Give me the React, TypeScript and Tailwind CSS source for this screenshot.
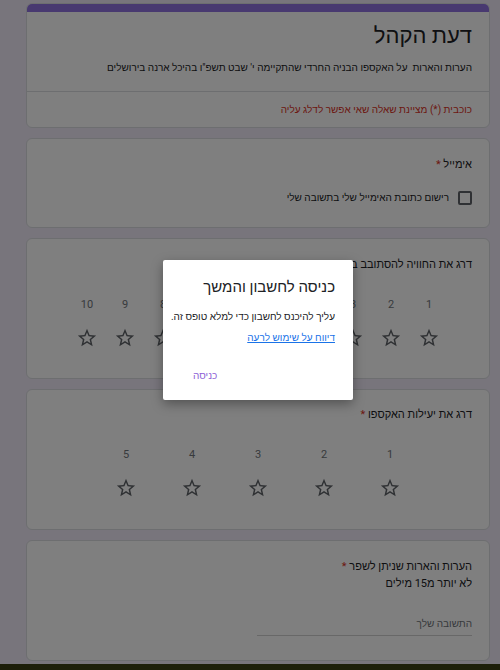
const STAR_PATH =
  "M22 9.24l-7.19-.62L12 2 9.19 8.63 2 9.24l5.46 4.73L5.82 21 12 17.27 18.18 21l-1.63-7.03L22 9.24zM12 15.4l-3.76 2.27 1-4.28-3.32-2.88 4.38-.38L12 6.1l1.71 4.04 4.38.38-3.32 2.88 1 4.28L12 15.4z";

function StarOutline() {
  return (
    <svg viewBox="0 0 24 24" className="w-[22px] h-[22px] fill-[#5f6368]">
      <path d={STAR_PATH} />
    </svg>
  );
}

function Card({ children, className = "" }: { children: React.ReactNode; className?: string }) {
  return (
    <div className={`bg-white border border-[#dadce0] rounded-[6px] ${className}`}>{children}</div>
  );
}

function QuestionTitle({ text, required }: { text: string; required?: boolean }) {
  return (
    <p className="text-[11px] leading-[16px] text-[#202124]">
      {text}
      {required && <span className="text-[#d93025]"> *</span>}
    </p>
  );
}

function StarRating({ count, colWidth }: { count: number; colWidth: string }) {
  const items = Array.from({ length: count }, (_, i) => i + 1);
  return (
    <div className="flex justify-center mt-[25px]">
      {items.map((n) => (
        <div key={n} className={`${colWidth} flex flex-col items-center`}>
          <span className="text-[11px] leading-[14px] text-[#70757a]">{n}</span>
          <div className="mt-[15px]">
            <StarOutline />
          </div>
        </div>
      ))}
    </div>
  );
}

export default function App() {
  return (
    <div
      dir="rtl"
      className="relative w-[500px] h-[670px] overflow-hidden bg-[#f0ebf8] font-['Roboto','Liberation_Sans',Arial,sans-serif]"
    >
      <div className="flex flex-col gap-[10px] pt-[3px] pl-[26px] pr-[10px]">
        <Card className="overflow-hidden">
          <div className="h-[8px] bg-[#9172e0]" />
          <div className="px-[17px] pt-[9px] pb-[16px]">
            <h1 className="text-[22px] leading-[30px] text-[#202124]">דעת הקהל</h1>
            <p className="mt-[10px] text-[10px] leading-[14px] text-[#202124]">
              הערות והארות&nbsp; על האקספו הבניה החרדי שהתקיימה י' שבט תשפ"ו בהיכל ארנה בירושלים
            </p>
          </div>
          <div className="border-t border-[#dadce0] px-[17px] pt-[11px] pb-[10px]">
            <p className="text-[10px] leading-[14px] text-[#d93025]">כוכבית (*) מציינת שאלה שאי אפשר לדלג עליה</p>
          </div>
        </Card>

        <Card className="px-[17px] pt-[18px] pb-[22px]">
          <QuestionTitle text="אימייל" required />
          <div className="flex items-center gap-[9px] mt-[18px]">
            <div className="w-[14px] h-[14px] border-2 border-[#5f6368] rounded-[2px]" />
            <span className="text-[10px] leading-[14px] text-[#202124]">רישום כתובת האימייל שלי בתשובה שלי</span>
          </div>
        </Card>

        <Card className="px-[17px] pt-[18px] h-[141px]">
          <QuestionTitle text="דרג את החוויה להסתובב באקספו" required />
          <StarRating count={10} colWidth="w-[38px]" />
        </Card>

        <Card className="px-[17px] pt-[17px] h-[141px]">
          <QuestionTitle text="דרג את יעילות האקספו" required />
          <StarRating count={5} colWidth="w-[66px]" />
        </Card>

        <Card className="px-[17px] pt-[18px] pb-[24px]">
          <QuestionTitle text="הערות והארות שניתן לשפר" required />
          <p className="text-[11px] leading-[17px] text-[#202124]">לא יותר מ15 מילים</p>
          <div className="w-[215px] mt-[25px] border-b border-[#d0d0d0] pb-[4px]">
            <span className="block text-[10px] leading-[14px] text-[#70757a]">התשובה שלך</span>
          </div>
        </Card>
      </div>

      <div className="absolute left-0 right-0 bottom-0 h-[6px] bg-[#3a3e14]" />

      <div className="absolute inset-0 bg-black/50" />

      <div className="absolute left-[163px] top-[260px] w-[190px] h-[140px] bg-white rounded-[2px] shadow-[0_4px_12px_rgba(0,0,0,0.35)] px-[18px] pt-[17px]">
        <h2 className="text-[15px] leading-[20px] font-medium text-[#202124]">כניסה לחשבון והמשך</h2>
        <p className="mt-[13px] text-[10px] leading-[14px] text-[#202124] whitespace-nowrap">עליך להיכנס לחשבון כדי למלא טופס זה.</p>
        <a href="#" className="block mt-[7px] text-[10px] leading-[14px] text-[#1a73e8] underline">
          דיווח על שימוש לרעה
        </a>
        <div className="flex justify-end mt-[24px] pl-[12px]">
          <button className="text-[10px] leading-[14px] text-[#8e5fd6]">כניסה</button>
        </div>
      </div>
    </div>
  );
}
